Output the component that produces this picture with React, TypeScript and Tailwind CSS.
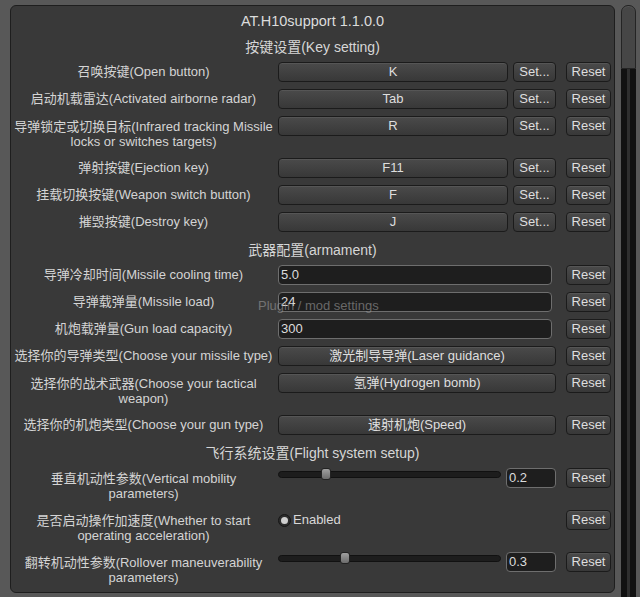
import React from "react";

const font = { fontFamily: '"Liberation Sans", "Noto Sans CJK SC", Arial, sans-serif' };

const btn =
  "flex items-center justify-center h-[20px] rounded-[4px] border border-[#1b1b1b] bg-linear-to-b from-[#4a4a4a] to-[#383838] shadow-[inset_0_1px_0_rgba(255,255,255,0.07)] text-[13px] text-[#dedede] whitespace-nowrap";

const field =
  "flex items-center h-[20px] rounded-[4px] border border-[#6e6e6e] bg-[#1e1e1e] pl-[2px] text-[13px] text-[#dcdcdc]";

function Reset() {
  return <div className={`${btn} w-[45px]`}>Reset</div>;
}

function Row({ label, tall, children }: { label: React.ReactNode; tall?: boolean; children?: React.ReactNode }) {
  return (
    <div className={`flex items-start ${tall ? "h-[35px]" : "h-[20px]"}`}>
      <div
        className={`w-[265px] text-center text-[13px] text-[#d4d4d4] whitespace-nowrap ${
          tall ? "pt-[3px] leading-[15px]" : "leading-[20px]"
        }`}
      >
        {label}
      </div>
      <div className="ml-[2px] flex h-[20px] w-[278px] items-start">{children}</div>
      <div className="ml-[10px]">
        <Reset />
      </div>
    </div>
  );
}

function Header({ children }: { children: React.ReactNode }) {
  return (
    <div className="-mb-[2px] h-[19px] text-center text-[14px] leading-[19px] text-[#d6d6d6]">{children}</div>
  );
}

function KeyRow({ label, value, tall }: { label: React.ReactNode; value: string; tall?: boolean }) {
  return (
    <Row label={label} tall={tall}>
      <div className={`${btn} flex-1`}>{value}</div>
      <div className={`${btn} ml-[5px] w-[43px]`}>Set...</div>
    </Row>
  );
}

function InputRow({ label, value }: { label: string; value: string }) {
  return (
    <Row label={label}>
      <div className={`${field} w-[274px]`}>{value}</div>
    </Row>
  );
}

function Slider({ value }: { value: number }) {
  return (
    <div className="relative flex h-[12px] flex-1 items-center">
      <div className="h-[7px] w-full rounded-full border border-[#111] bg-[#1d1d1d]" />
      <div
        className="absolute top-0 h-[12px] w-[10px] rounded-[3px] border border-[#222] bg-linear-to-b from-[#a0a0a0] to-[#6c6c6c]"
        style={{ left: `${value * 214}px` }}
      />
    </div>
  );
}

export default function App() {
  return (
    <div className="relative flex h-[597px] w-[640px] overflow-hidden bg-[#585858] pl-[10px] pt-[5px]" style={font}>
      <div className="flex h-[588px] w-[605px] flex-col rounded-[6px] border border-[#1e1e1e] bg-[#393939] pl-0">
        <div className="mt-[5px] h-[20px] text-center text-[14.5px] leading-[20px] text-[#dcdcdc]">
          AT.H10support 1.1.0.0
        </div>

        <div className="mt-[7px] flex flex-col gap-[7px]">
          <Header>按键设置(Key setting)</Header>
          <KeyRow label="召唤按键(Open button)" value="K" />
          <KeyRow label="启动机载雷达(Activated airborne radar)" value="Tab" />
          <KeyRow
            tall
            label={
              <>
                导弹锁定或切换目标(Infrared tracking Missile
                <br />
                locks or switches targets)
              </>
            }
            value="R"
          />
          <KeyRow label="弹射按键(Ejection key)" value="F11" />
          <KeyRow label="挂载切换按键(Weapon switch button)" value="F" />
          <KeyRow label="摧毁按键(Destroy key)" value="J" />
        </div>

        <div className="mt-[9px] flex flex-col gap-[7px]">
          <Header>武器配置(armament)</Header>
          <InputRow label="导弹冷却时间(Missile cooling time)" value="5.0" />
          <InputRow label="导弹载弹量(Missile load)" value="24" />
          <InputRow label="机炮载弹量(Gun load capacity)" value="300" />
          <Row label="选择你的导弹类型(Choose your missile type)">
            <div className={`${btn} w-full`}>激光制导导弹(Laser guidance)</div>
          </Row>
          <Row
            tall
            label={
              <>
                选择你的战术武器(Choose your tactical
                <br />
                weapon)
              </>
            }
          >
            <div className={`${btn} w-full`}>氢弹(Hydrogen bomb)</div>
          </Row>
          <Row label="选择你的机炮类型(Choose your gun type)">
            <div className={`${btn} w-full`}>速射机炮(Speed)</div>
          </Row>
        </div>

        <div className="mt-[9px] flex flex-col gap-[7px]">
          <Header>飞行系统设置(Flight system setup)</Header>
          <Row
            tall
            label={
              <>
                垂直机动性参数(Vertical mobility
                <br />
                parameters)
              </>
            }
          >
            <Slider value={0.2} />
            <div className={`${field} ml-[5px] w-[50px]`}>0.2</div>
          </Row>
          <Row
            tall
            label={
              <>
                是否启动操作加速度(Whether to start
                <br />
                operating acceleration)
              </>
            }
          >
            <div className="flex h-[20px] items-center">
              <div className="flex h-[13px] w-[13px] items-center justify-center rounded-full border border-[#161616] bg-[#2c2c2c]">
                <div className="h-[7px] w-[7px] rounded-full bg-[#cfcfcf]" />
              </div>
              <span className="ml-[2px] text-[13px] text-[#d8d8d8]">Enabled</span>
            </div>
          </Row>
          <Row
            tall
            label={
              <>
                翻转机动性参数(Rollover maneuverability
                <br />
                parameters)
              </>
            }
          >
            <Slider value={0.29} />
            <div className={`${field} ml-[5px] w-[50px]`}>0.3</div>
          </Row>
        </div>
      </div>

      <div className="ml-[6px] flex w-[15px] flex-col">
        <div className="h-[64px] rounded-t-[7px] border border-[#242424] bg-[#464646] shadow-[inset_0_1px_0_rgba(255,255,255,0.08)]" />
        <div className="flex flex-1 justify-center border-x-[3px] border-[#111] bg-[#111]">
          <div className="w-[3px] bg-[#2e2e2e]" />
        </div>
      </div>

      <div className="pointer-events-none absolute left-[258px] top-[298px] text-[13px] leading-[16px] text-[#9a9a9a] opacity-60">
        Plugin / mod settings
      </div>
    </div>
  );
}
